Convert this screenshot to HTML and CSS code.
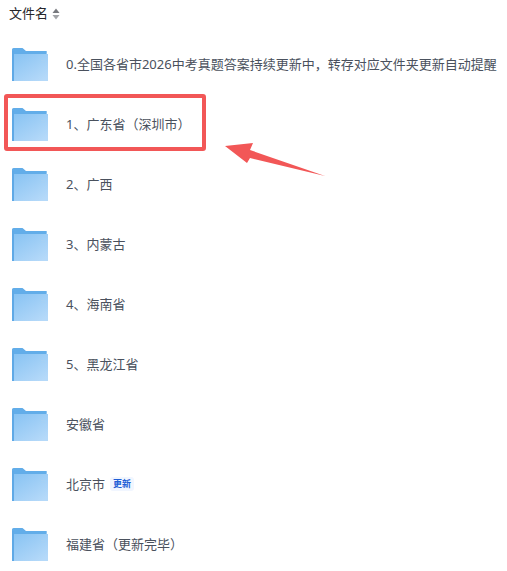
FILE: index.html
```html
<!DOCTYPE html>
<html lang="zh-CN">
<head>
<meta charset="utf-8">
<title>文件名</title>
<link rel="stylesheet" href="styles.css">
</head>
<body>
<svg width="0" height="0" class="defs">
  <defs>
    <linearGradient id="fb" x1="0" y1="0" x2="0.8" y2="1">
      <stop offset="0" stop-color="#88c3f3"/>
      <stop offset="1" stop-color="#b5d9f9"/>
    </linearGradient>
    <symbol id="folder" viewBox="0 0 36 33">
      <path d="M0 1.5Q0 0 1.5 0H10.5L14 3H34.5Q35 3 34.5 7H0Z" fill="#62ade9"/>
      <path d="M0 3H34V7H0Z" fill="#62ade9"/>
      <path d="M2 6H36V33H2Z" fill="url(#fb)"/>
      <path d="M0 3H2V33H0Z" fill="#5fa9e6"/>
      <path d="M29 12H33V13H29ZM29 14H33V15H29Z" fill="#a6d0f3"/>
    </symbol>
  </defs>
</svg>
<main class="list">
  <header class="head"><span>文件名</span>
    <svg class="sort" viewBox="0 0 8 12" width="8" height="12"><path d="M4 0.5L7.5 5H0.5Z" fill="#77797e"/><path d="M4 11.5L7.5 7H0.5Z" fill="#a2a4a8"/></svg>
  </header>
  <div class="row"><svg class="folder"><use href="#folder"/></svg><span>0.全国各省市2026中考真题答案持续更新中，转存对应文件夹更新自动提醒</span></div>
  <div class="row"><svg class="folder"><use href="#folder"/></svg><span>1、广东省（深圳市）</span></div>
  <div class="row"><svg class="folder"><use href="#folder"/></svg><span>2、广西</span></div>
  <div class="row"><svg class="folder"><use href="#folder"/></svg><span>3、内蒙古</span></div>
  <div class="row"><svg class="folder"><use href="#folder"/></svg><span>4、海南省</span></div>
  <div class="row"><svg class="folder"><use href="#folder"/></svg><span>5、黑龙江省</span></div>
  <div class="row"><svg class="folder"><use href="#folder"/></svg><span>安徽省</span></div>
  <div class="row"><svg class="folder"><use href="#folder"/></svg><span>北京市</span><em class="badge">更新</em></div>
  <div class="row"><svg class="folder"><use href="#folder"/></svg><span>福建省（更新完毕）</span></div>
</main>
<div class="mark"></div>
<svg class="arrow" viewBox="0 0 110 40" width="110" height="40"><path d="M5 16L33 13L30 20L105 46L30 28L27 33Z" fill="#f25757"/></svg>
</body>
</html>
```
FILE: styles.css
```css
html, body {
  margin: 0;
  height: 100%;
  overflow: hidden;
  background: #fff;
}
body {
  position: relative;
  font-family: "Noto Sans", "Noto Sans CJK SC", sans-serif;
  font-size: 13px;
  color: #4a515d;
}
.defs {
  position: absolute;
}
.list {
  display: flex;
  flex-direction: column;
}
.head {
  display: flex;
  align-items: center;
  gap: 4px;
  height: 28px;
  padding-left: 9px;
  color: #25262b;
}
.head span {
  line-height: 26px;
  height: 28px;
}
.row {
  display: flex;
  align-items: center;
  height: 60px;
  padding-left: 12px;
  flex: none;
}
.row:first-of-type {
  margin-top: 6px;
}
.folder {
  width: 36px;
  height: 33px;
  margin-right: 18px;
  flex: none;
}
.row span {
  white-space: nowrap;
  margin-bottom: 2px;
}
.badge {
  margin-left: 5px;
  padding: 0 3px;
  border-radius: 3px;
  background: #f1f6ff;
  color: #1f5fd6;
  font-size: 9px;
  font-weight: 700;
  font-style: normal;
  line-height: 14px;
}
.mark {
  position: absolute;
  left: 4px;
  top: 94px;
  width: 194px;
  height: 49px;
  border: 4px solid #f25757;
  border-radius: 3px;
}
.arrow {
  position: absolute;
  left: 220px;
  top: 130px;
  overflow: visible;
}
```
